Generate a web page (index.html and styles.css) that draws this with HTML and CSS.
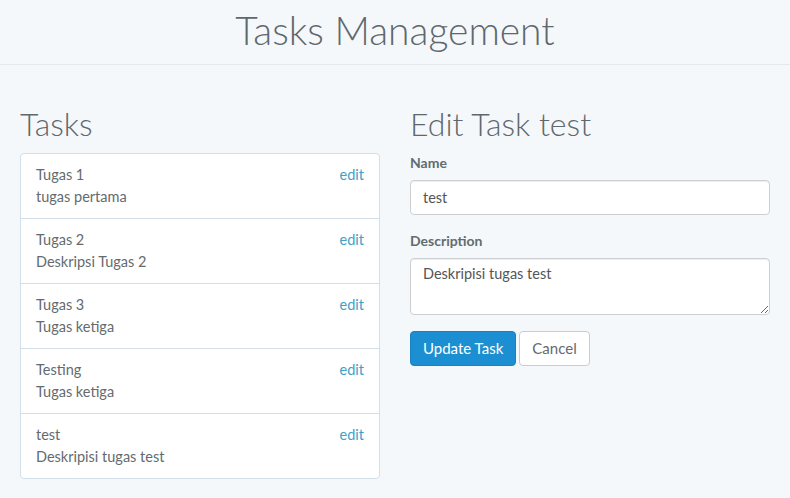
FILE: index.html
```html
<!DOCTYPE html>
<html lang="id">
<head>
<meta charset="utf-8">
<title>Tasks Management</title>
<link rel="stylesheet" href="styles.css">
</head>
<body>
<header class="header">
  <h1 class="title">Tasks Management</h1>
</header>
<main class="container">
  <section class="col">
    <h2 class="heading">Tasks</h2>
    <ul class="list">
      <li class="item"><div class="item-text"><div>Tugas 1</div><div>tugas pertama</div></div><a class="edit" href="#">edit</a></li>
      <li class="item"><div class="item-text"><div>Tugas 2</div><div>Deskripsi Tugas 2</div></div><a class="edit" href="#">edit</a></li>
      <li class="item"><div class="item-text"><div>Tugas 3</div><div>Tugas ketiga</div></div><a class="edit" href="#">edit</a></li>
      <li class="item"><div class="item-text"><div>Testing</div><div>Tugas ketiga</div></div><a class="edit" href="#">edit</a></li>
      <li class="item"><div class="item-text"><div>test</div><div>Deskripisi tugas test</div></div><a class="edit" href="#">edit</a></li>
    </ul>
  </section>
  <section class="col">
    <h2 class="heading">Edit Task test</h2>
    <form class="form">
      <div class="group">
        <label class="label" for="name">Name</label>
        <input class="input" id="name" type="text" value="test">
      </div>
      <div class="group">
        <label class="label" for="desc">Description</label>
        <textarea class="input textarea" id="desc">Deskripisi tugas test</textarea>
      </div>
      <div class="actions">
        <button class="btn btn-primary" type="button">Update Task</button>
        <button class="btn btn-default" type="button">Cancel</button>
      </div>
    </form>
  </section>
</main>
</body>
</html>
```

FILE: styles.css
```css
* { box-sizing: border-box; }
html, body {
  margin: 0;
  background: #f5f8fa;
  font-family: Lato, "Open Sans", sans-serif;
  font-size: 14px;
  color: #636b6f;
}
.header {
  height: 65px;
  border-bottom: 1px solid #e4e9ec;
  display: flex;
  align-items: center;
  justify-content: center;
}
.title {
  margin: 0;
  font-size: 39px;
  font-weight: 300;
  color: #5e686d;
  line-height: 1;
  padding-bottom: 4px;
}
.container {
  display: flex;
  gap: 30px;
  padding: 0 20px;
}
.col { width: 360px; }
.heading {
  margin: 42px 0 13px;
  font-size: 32px;
  font-weight: 300;
  line-height: 33px;
  color: #5e686d;
}
.list {
  list-style: none;
  margin: 0;
  padding: 0;
  background: #fff;
  border: 1px solid #d3e0e9;
  border-radius: 4px;
}
.item {
  display: flex;
  justify-content: space-between;
  align-items: flex-start;
  padding: 10px 15px;
  line-height: 22px;
  font-size: 14.5px;
  color: #636b6f;
  border-bottom: 1px solid #d3e0e9;
}
.item:last-child { border-bottom: none; }
.edit {
  color: #3e9fc7;
  text-decoration: none;
}
.group { margin-bottom: 16px; }
.label {
  display: block;
  font-weight: 700;
  font-size: 14px;
  margin-bottom: 7px;
  line-height: 20px;
  color: #636b6f;
}
.input {
  display: block;
  width: 100%;
  height: 35px;
  padding: 6px 12px;
  font-family: inherit;
  font-size: 14.5px;
  color: #555;
  background: #fff;
  border: 1px solid #ccd0d2;
  border-radius: 4px;
  box-shadow: inset 0 1px 1px rgba(0,0,0,.075);
}
.textarea {
  height: 57px;
  resize: vertical;
}
.actions {
  display: flex;
  gap: 3px;
}
.btn {
  height: 35px;
  padding: 6px 12px;
  font-family: inherit;
  font-size: 15px;
  line-height: 21px;
  border-radius: 4px;
  border: 1px solid transparent;
}
.btn-primary {
  background: #1b8fd1;
  border-color: #1a82be;
  color: #fff;
}
.btn-default {
  background: #fff;
  border-color: #ccc;
  color: #636b6f;
}
```
